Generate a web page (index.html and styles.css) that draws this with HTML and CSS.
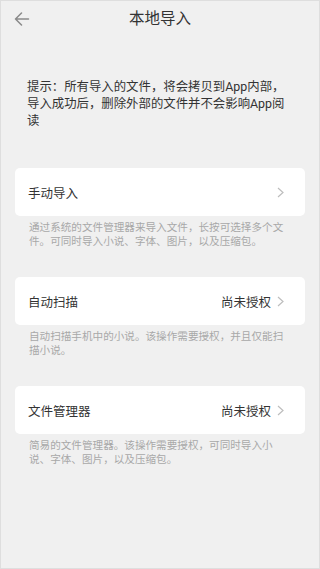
FILE: index.html
```html
<!DOCTYPE html>
<html lang="zh-CN">

<head>
  <meta charset="UTF-8">
  <meta name="viewport" content="width=device-width, initial-scale=1.0">
  <title>本地导入</title>
  <link rel="stylesheet" href="styles.css">
</head>

<body>
  <div class="page">
    <!-- 标题栏 -->
    <div class="header">
      <div class="back">
        <svg width="16" height="14" viewBox="0 0 16 14">
          <path d="M14.5 7H1.5M7.5 1L1.5 7L7.5 13" fill="none" stroke="#8a8a8a" stroke-width="1.5" stroke-linecap="round" stroke-linejoin="round" />
        </svg>
      </div>
      <h1 class="title">本地导入</h1>
      <div></div>
    </div>

    <p class="tip">提示：所有导入的文件，将会拷贝到App内部，<br>导入成功后，删除外部的文件并不会影响App阅读</p>

    <div class="group">
      <div class="item">
        <span class="label">手动导入</span>
        <span class="value"></span>
        <svg class="arrow" width="7" height="11" viewBox="0 0 7 11">
          <path d="M1 1L6 5.5L1 10" fill="none" stroke="#bdbdbd" stroke-width="1.2" />
        </svg>
      </div>
      <p class="desc">通过系统的文件管理器来导入文件，长按可选择多个文件。可同时导入小说、字体、图片，以及压缩包。</p>
    </div>

    <div class="group">
      <div class="item">
        <span class="label">自动扫描</span>
        <span class="value">尚未授权</span>
        <svg class="arrow" width="7" height="11" viewBox="0 0 7 11">
          <path d="M1 1L6 5.5L1 10" fill="none" stroke="#bdbdbd" stroke-width="1.2" />
        </svg>
      </div>
      <p class="desc">自动扫描手机中的小说。该操作需要授权，并且仅能扫描小说。</p>
    </div>

    <div class="group">
      <div class="item">
        <span class="label">文件管理器</span>
        <span class="value">尚未授权</span>
        <svg class="arrow" width="7" height="11" viewBox="0 0 7 11">
          <path d="M1 1L6 5.5L1 10" fill="none" stroke="#bdbdbd" stroke-width="1.2" />
        </svg>
      </div>
      <p class="desc">简易的文件管理器。该操作需要授权，可同时导入小说、字体、图片，以及压缩包。</p>
    </div>
  </div>
</body>

</html>
```

FILE: styles.css
```css
* {
  margin: 0;
  padding: 0;
  box-sizing: border-box;
}

body {
  font-family: Roboto, "Noto Sans CJK SC", sans-serif;
  color: #333;
}

.page {
  height: 569px;
  background-color: #f0f0f0;
  border: 1px solid #dedede;
}

.header {
  height: 35px;
  display: grid;
  grid-template-columns: 1fr auto 1fr;
  align-items: center;

  & .back {
    padding-left: 13px;
    display: flex;
    align-items: center;
  }

  & .title {
    font-size: 15.5px;
    font-weight: 400;
    line-height: 20px;
    color: #333;
  }
}

.tip {
  padding: 42px 28px 0 26px;
  font-size: 12.4px;
  line-height: 17px;
  color: #333;
}

.group {
  margin-top: 28px;
}

.tip + .group {
  margin-top: 39px;
}

.item {
  height: 48px;
  margin: 0 14px;
  padding: 0 21px 0 13px;
  background-color: #fff;
  border-radius: 5px;
  display: flex;
  align-items: center;
  font-size: 12.5px;

  & .label {
    flex: 1;
  }

  & .value {
    margin-right: 6px;
  }
}

.desc {
  padding: 5px 30px 0 28px;
  font-size: 10.6px;
  line-height: 14px;
  color: #a8a8a8;
}
```
